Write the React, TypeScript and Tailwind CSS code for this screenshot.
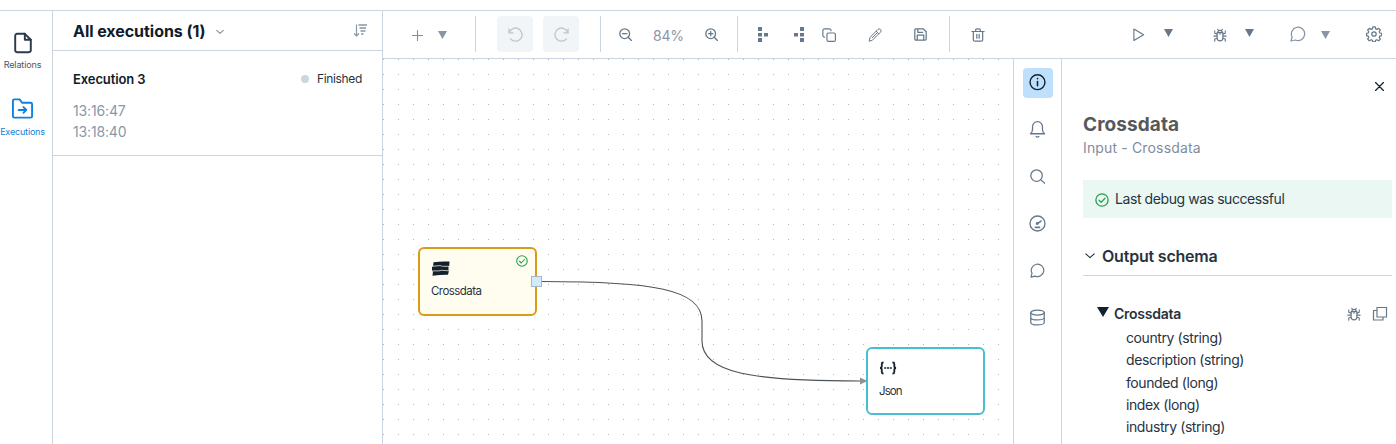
import React from "react";
import type { ReactNode, SVGProps } from "react";

type IconProps = SVGProps<SVGSVGElement> & { size?: number };

function Icon({ size = 16, children, strokeWidth = 1.5, ...rest }: IconProps) {
  return (
    <svg
      width={size}
      height={size}
      viewBox="0 0 24 24"
      fill="none"
      stroke="currentColor"
      strokeWidth={strokeWidth}
      strokeLinecap="round"
      strokeLinejoin="round"
      className="block shrink-0"
      {...rest}
    >
      {children}
    </svg>
  );
}

const Bug = ({ size = 15 }: { size?: number }) => (
  <Icon size={size} strokeWidth={1.9}>
    <path d="M7 8h10v9a5 5 0 0 1-10 0z" />
    <path d="M8 8a4 4 0 0 1 8 0" />
    <path d="M8 2.5l2 2M16 2.5l-2 2M12 8.5v2M7 10.500L3 9V5M17 10.500L21 9V5M7 14H1.500M17 14h5.500M7 17.500L3 19v3.500M17 17.500l4 1.500v3.500" />
  </Icon>
);

const Chat = ({ size = 17 }: { size?: number }) => (
  <Icon size={size} strokeWidth={1.9}>
    <path d="M1.500 22.500l1.700-6A10 10 0 1 1 8 21z" />
  </Icon>
);

const CheckCircle = ({ size = 14 }: { size?: number }) => (
  <Icon size={size} strokeWidth={2.2}>
    <circle cx="12" cy="12" r="10.500" />
    <path d="M7 12.500l3.500 3.500L17 9" />
  </Icon>
);

const Caret = ({ className = "" }: { className?: string }) => (
  <svg width="9" height="8" viewBox="0 0 9 8" fill="currentColor" className={`block shrink-0 ${className}`}>
    <path d="M0 0h9L4.500 8z" />
  </svg>
);

const Chevron = ({ size = 10, strokeWidth = 2.8 }: { size?: number; strokeWidth?: number }) => (
  <Icon size={size} strokeWidth={strokeWidth}>
    <path d="M2 7l10 9 10-9" />
  </Icon>
);

function Cell({ className, children }: { className: string; children: ReactNode }) {
  return <div className={`flex h-9 shrink-0 items-center justify-center ${className}`}>{children}</div>;
}

const Divider = () => <div className="h-9 w-px shrink-0 bg-[#cbd5df]" />;

function NavRail() {
  return (
    <nav className="flex w-[53px] shrink-0 flex-col border-r border-[#cbd5df]">
      <div className="flex h-[67px] w-[45px] flex-col items-center pt-[21px] text-[#2c3a47]">
        <Icon size={22} strokeWidth={2.1}>
          <path d="M14 2H5.500A2 2 0 0 0 3.500 4v16a2 2 0 0 0 2 2h13a2 2 0 0 0 2-2V8.500z" />
          <path d="M14 2v6.500h6.500" />
        </Icon>
        <span className="mt-[5px] text-[9px] leading-[12px] tracking-[-0.13px] text-[#4a5560]">Relations</span>
      </div>
      <div className="flex h-[67px] w-[45px] flex-col items-center pt-[19px] text-[#0f81e0]">
        <Icon size={23} strokeWidth={2}>
          <path d="M2 20V4a1.500 1.500 0 0 1 1.500-1.500H9L11.500 6H20.500A1.500 1.500 0 0 1 22 7.500V20a1.500 1.500 0 0 1-1.500 1.500h-17A1.500 1.500 0 0 1 2 20z" />
          <path d="M8 13.500h8M13 10.500l3 3-3 3" />
        </Icon>
        <span className="mt-[6px] text-[9px] leading-[12px] tracking-[-0.17px]">Executions</span>
      </div>
    </nav>
  );
}

function ExecutionsPanel() {
  return (
    <section className="w-[330px] shrink-0 border-r border-[#cbd5df]">
      <header className="flex h-10 items-center border-b border-[#cbd5df] pr-[14px] pl-5">
        <h1 className="text-[16px] leading-5 font-bold tracking-[-0.05px] text-[#101b28]">All executions (1)</h1>
        <span className="ml-[10px] pt-[2px] text-[#8593a2]">
          <Chevron size={8} strokeWidth={3.5} />
        </span>
        <svg width="15" height="16" viewBox="0 0 15 16" fill="none" stroke="#8696a6" className="ml-auto block">
          <path d="M3.500 1.500v11M1 10.500L3.500 13 6 10.500" strokeWidth="1.200" />
          <path d="M5.500 2H14M6.500 5h6.500M7.500 8h5M8 11h2.500" strokeWidth="1.400" />
        </svg>
      </header>
      <article className="h-[105px] border-b border-[#cbd5df] pt-[18px] pr-5 pl-5">
        <div className="flex items-center justify-between leading-5">
          <span className="text-[13px] font-semibold tracking-[-0.1px] text-[#101b28]">Execution 3</span>
          <span className="flex items-center gap-2 text-[12px] tracking-[-0.33px] text-[#27333f]">
            <i className="block size-2 rounded-full bg-[#cbd5df]" />
            Finished
          </span>
        </div>
        <div className="mt-[11px] text-[14px] leading-[21px] tracking-[-0.15px] text-[#8998a8]">
          <div>13:16:47</div>
          <div>13:18:40</div>
        </div>
      </article>
    </section>
  );
}

function Toolbar() {
  return (
    <div className="flex h-12 shrink-0 items-start border-b border-[#cbd5df] pt-[5px] text-[#66788a]">
      <Cell className="ml-[21px] w-[26px] pt-px text-[#7e8e9e]">
        <Icon size={12} strokeWidth={2.200}><path d="M3 13h20M13 3v20" /></Icon>
      </Cell>
      <Cell className="mr-5 w-[25px] pt-[2px] text-[#8696a6]"><Caret /></Cell>
      <Divider />
      <Cell className="ml-[21px] w-9 rounded bg-[#f1f5f8] text-[#c4c6c8]">
        <Icon size={15} strokeWidth={2.1}><path d="M1.500 3v6.500H8M2 9A10.500 10.500 0 1 1 4 19" /></Icon>
      </Cell>
      <Cell className="ml-[10px] w-9 rounded bg-[#f1f5f8] text-[#c4c6c8]">
        <Icon size={15} strokeWidth={2.1}><path d="M22.500 3v6.500H16M22 9A10.500 10.500 0 1 0 20 19" /></Icon>
      </Cell>
      <div className="w-[21px] shrink-0" />
      <Divider />
      <Cell className="ml-[12px] w-[25px] pt-px">
        <Icon size={13} strokeWidth={2.4}><circle cx="10.500" cy="10.500" r="9" /><path d="M17 17l6 6M6.500 10.500h8" /></Icon>
      </Cell>
      <Cell className="w-[61px] pt-[2px] text-[14px] tracking-[-0.2px] text-[#8998a8]">84%</Cell>
      <Cell className="mr-[13px] w-[25px] pt-px">
        <Icon size={13} strokeWidth={2.4}><circle cx="10.500" cy="10.500" r="9" /><path d="M17 17l6 6M6.500 10.500h8M10.500 6.500v8" /></Icon>
      </Cell>
      <Divider />
      <Cell className="ml-[15px] w-5 pt-px">
        <svg width="10" height="15" viewBox="0 0 10 15" fill="currentColor"><path d="M0 0h4v4H0zM0 6h4v3.500H0zM0 11h4v4H0zM6 6h4v3.500H6z" /></svg>
      </Cell>
      <Cell className="ml-4 w-5 pt-px">
        <svg width="10" height="15" viewBox="0 0 10 15" fill="currentColor"><path d="M6 0h4v4H6zM6 6h4v3.500H6zM6 11h4v4H6zM0 6h4v3.500H0z" /></svg>
      </Cell>
      <Cell className="ml-[10px] w-5 pt-px">
        <Icon size={14} strokeWidth={2}><rect x="8.500" y="8.500" width="14.500" height="14.500" rx="2.500" /><path d="M4.500 15.500H4A2.500 2.500 0 0 1 1.500 13V4A2.500 2.500 0 0 1 4 1.500h9A2.500 2.500 0 0 1 15.500 4v.5" /></Icon>
      </Cell>
      <Cell className="ml-[26px] w-5 pt-px">
        <Icon size={14} strokeWidth={1.700}><path d="M2 22l1.500-6L17 2.500a3 3 0 0 1 4.500 4.500L8 20.500zM14 5.500l4.500 4.500M7 17l8.500-8.500" /></Icon>
      </Cell>
      <Cell className="mr-px ml-[26px] w-[19px] pt-px">
        <Icon size={13} strokeWidth={2.3}><path d="M4 1.500h13l5.500 5.500v13.500a2 2 0 0 1-2 2H3.500a2 2 0 0 1-2-2V3.500a2 2 0 0 1 2-2zM6 22v-9h12v9M7 2v6h9" /></Icon>
      </Cell>
      <div className="w-[18px] shrink-0" />
      <Divider />
      <Cell className="ml-[18px] w-5 pt-px">
        <Icon size={14} strokeWidth={2.1}><path d="M1.500 6h21M4 6v14a2.500 2.500 0 0 0 2.500 2.500h11A2.500 2.500 0 0 0 20 20V6M8 6V3.500A2 2 0 0 1 10 1.500h4a2 2 0 0 1 2 2V6M10 11v6.500M14 11v6.500" /></Icon>
      </Cell>
      <div className="ml-auto flex shrink-0 items-center">
        <Cell className="w-5 pt-px"><Icon size={13} strokeWidth={2.1}><path d="M3.500 2l18 10.500-18 10.500z" /></Icon></Cell>
        <Cell className="ml-[11px] w-[19px] pb-[2px]"><Caret /></Cell>
        <Cell className="ml-8 w-5 pt-px"><Bug size={14} /></Cell>
        <Cell className="ml-[10px] w-[19px] pb-[2px]"><Caret /></Cell>
        <Cell className="ml-[29px] w-5 text-[#8696a6]"><Chat size={16} /></Cell>
        <Cell className="ml-[8px] w-[19px] pt-px text-[#8696a6]"><Caret /></Cell>
        <Cell className="mr-3 ml-[29px] w-5">
          <Icon size={16} strokeWidth={1.9}>
            <circle cx="12" cy="12" r="3.300" />
            <path d="M10.200 1.300h3.600l.7 3 1.800.8 2.700-1.600 2.500 2.500-1.600 2.700.8 1.800 2.900.7v3.300l-2.900.7-.8 1.900 1.600 2.600-2.500 2.500-2.700-1.600-1.800.8-.7 2.600h-3.600l-.7-2.600-1.800-.8L5 22.200l-2.500-2.500 1.600-2.600-.8-1.900-2.500-.7v-3.300l2.500-.7.8-1.800-1.600-2.700L5 3.500l2.700 1.600 1.800-.8z" />
          </Icon>
        </Cell>
      </div>
    </div>
  );
}

function Canvas() {
  return (
    <main className="relative w-[630px] shrink-0 overflow-hidden bg-[radial-gradient(circle_at_0.5px_0.5px,#b4b8bb_0.6px,transparent_0.6px)] bg-size-[15px_15px]">
      <svg width="630" height="385" className="absolute inset-0" fill="none">
        <path d="M159 222.500C269 222.500 319 230 319 262V282C319 314 369 322 477 322" stroke="#4c5358" strokeWidth="1.100" />
        <path d="M477 318.500l7.500 3.500-7.500 3.500z" fill="#8e9294" />
      </svg>
      <div className="absolute top-[188px] left-[35px] h-[69px] w-[119px] rounded-[6px] border-2 border-[#da9b1b] bg-[#fffdf0] pt-[12px] pl-[11px]">
        <svg width="19" height="15" viewBox="0 0 19 15" fill="#14202b" className="block">
          <path d="M2.500 1.300Q10 .1 18.500 .6L18.200 4.900H17.500V9.500H18L17 13.700Q10 13.500 1.500 14.800L2 10.200H1V5.700H2z" />
          <path d="M2 5.200L9 4.600 11.500 5.300H18M1 9.900H8L10.500 9.300 18 9.800" stroke="#fffdf0" strokeWidth=".7" fill="none" />
        </svg>
        <div className="mt-[7px] text-[11.5px] leading-4 tracking-[-0.55px] text-[#27333f]">Crossdata</div>
        <span className="absolute top-[6px] right-[7px] text-[#28a04c]"><CheckCircle size={12} /></span>
        <i className="absolute top-[27px] right-[-7px] block size-[11px] border border-[#a7b7c9] bg-[#d3eafd]" />
      </div>
      <div className="absolute top-[288px] left-[483px] h-[68px] w-[119px] rounded-[6px] border-2 border-[#49bdd2] bg-white pt-[12px] pl-[11px]">
        <svg width="20" height="14" viewBox="0 0 20 14" fill="none" stroke="#14202b" strokeWidth="1.800" className="block">
          <path d="M4.500 1.500H4Q2.800 1.500 2.800 3v2Q2.800 7 1 7 2.800 7 2.800 9v2q0 1.500 1.200 1.500h.5M13.500 1.500h.5q1.300 0 1.300 1.500v2q0 2 1.800 2-1.800 0-1.800 2v2q0 1.500-1.300 1.500h-.5" />
          <path d="M5.200 7h2M8 7h2M10.800 7h2" strokeWidth="1.400" />
        </svg>
        <div className="mt-[8px] text-[11.5px] leading-4 tracking-[-0.9px] text-[#27333f]">Json</div>
      </div>
    </main>
  );
}

function SideTabs() {
  const cell = "flex size-[30px] shrink-0 items-center justify-center rounded pr-px pb-[2px]";
  return (
    <aside className="flex w-[49px] shrink-0 flex-col gap-[17px] border-x border-[#cbd5df] pt-[9px] pl-[9px] text-[#66788a]">
      <div className={`${cell} bg-[#bfe0fd] text-[#14202b]`}>
        <Icon size={17} strokeWidth={2}><circle cx="12" cy="11.500" r="10.500" /><path d="M12 10.500v6M12 6.500v.3" strokeWidth="2.200" /></Icon>
      </div>
      <div className={cell}>
        <Icon size={17} strokeWidth={1.800}><path d="M2 18Q5 15.500 5 11.500V8a7 7 0 0 1 14 0V11.500q0 4 3 6.500zM10 22q2 1.500 4 0" /></Icon>
      </div>
      <div className={cell}>
        <Icon size={15} strokeWidth={2}><circle cx="10.500" cy="10.500" r="9.200" /><path d="M17 17l6.500 6" /></Icon>
      </div>
      <div className={cell}>
        <Icon size={17} strokeWidth={1.900}><circle cx="12" cy="12" r="10.600" /><path d="M11.500 12.500l5.500-4M9 17.500h6" strokeWidth="2.200" /><circle cx="11.500" cy="12" r="1" /></Icon>
      </div>
      <div className={cell}><Chat size={15} /></div>
      <div className={cell}>
        <Icon size={17} strokeWidth={1.800}><ellipse cx="12" cy="5" rx="9.500" ry="3.500" /><path d="M2.500 5v14c0 2 4.200 3.500 9.500 3.500s9.500-1.500 9.500-3.500V5M2.500 12c0 2 4.200 3.500 9.500 3.500s9.500-1.500 9.500-3.500" /></Icon>
      </div>
    </aside>
  );
}

const fields = ["country (string)", "description (string)", "founded (long)", "index (long)", "industry (string)"];

function Inspector() {
  return (
    <section className="min-w-0 flex-1 pt-[23px] pr-1 pl-[21px]">
      <div className="flex justify-end pr-[8px] text-[#14202b]">
        <Icon size={9} strokeWidth={3.300}><path d="M1.500 1.500l21 21M22.500 1.500l-21 21" /></Icon>
      </div>
      <h2 className="mt-[20px] text-[19px] leading-7 font-bold tracking-[0.1px] text-[#57585a]">Crossdata</h2>
      <p className="-mt-px text-[14px] leading-[19px] tracking-[0.15px] text-[#7f8d9c]">Input - Crossdata</p>
      <div className="mt-[23px] flex h-[38px] items-center bg-[#eaf7f3] pl-3 text-[#28a04c]">
        <span className="pt-[2px]"><CheckCircle /></span>
        <span className="ml-[6px] pb-px text-[14px] tracking-[-0.42px] text-[#27333f]">Last debug was successful</span>
      </div>
      <h3 className="mt-[20px] flex h-[38px] items-center border-b border-[#cbd5df] pb-[2px] pl-[2px] text-[16px] font-semibold text-[#27333f]">
        <Chevron />
        <span className="ml-[7px] tracking-[-0.2px]">Output schema</span>
      </h3>
      <div className="mt-[26px] flex h-[22px] items-center pr-[4px] pl-[14px] text-[#66788a]">
        <span className="pb-[2px] text-[#14202b]"><svg width="12" height="10" viewBox="0 0 12 10" className="block"><path d="M0 0h12L6 10z" fill="currentColor" /></svg></span>
        <span className="ml-[5px] text-[14px] font-semibold tracking-[-0.25px] text-[#27333f]">Crossdata</span>
        <span className="mt-[2px] ml-auto"><Bug size={14} /></span>
        <svg width="16" height="16" viewBox="0 0 16 16" fill="none" stroke="currentColor" strokeWidth="1.200" className="mt-[2px] ml-[11px] block">
          <path d="M5 1.500h9.500V11H5zM5 4.500H1.500V14H11v-3" />
        </svg>
      </div>
      <ul className="mt-[3px] pl-[43px] text-[14px] leading-[22.25px] tracking-[-0.4px] text-[#27333f]">
        {fields.map((field) => (
          <li key={field}>{field}</li>
        ))}
      </ul>
    </section>
  );
}

export default function App() {
  return (
    <div className="flex h-[444px] w-[1396px] flex-col overflow-hidden bg-white pt-[10px] font-['Inter','Liberation_Sans',sans-serif]">
      <div className="flex min-h-0 flex-1 border-t border-[#cbd5df]">
        <NavRail />
        <ExecutionsPanel />
        <div className="flex min-w-0 flex-1 flex-col">
          <Toolbar />
          <div className="flex min-h-0 flex-1">
            <Canvas />
            <SideTabs />
            <Inspector />
          </div>
        </div>
      </div>
    </div>
  );
}
